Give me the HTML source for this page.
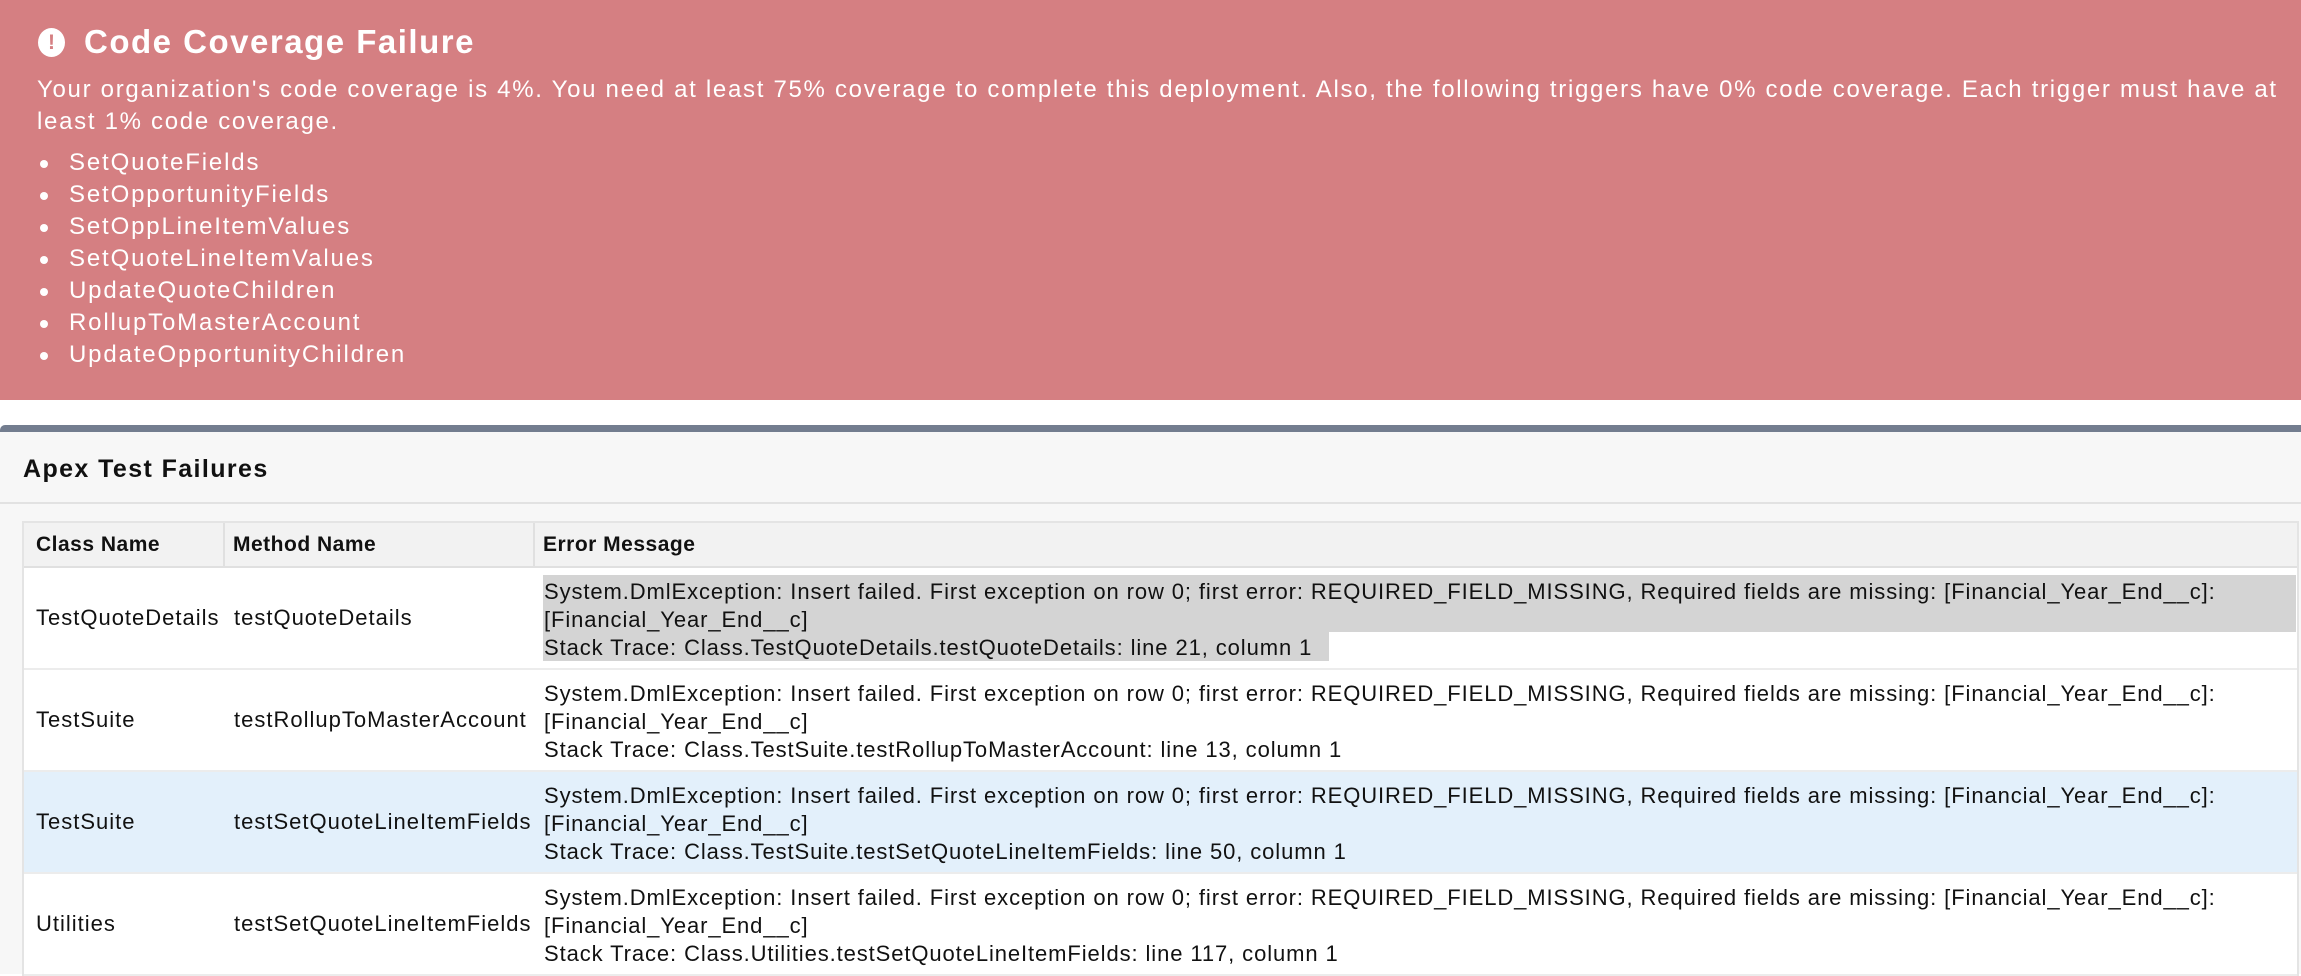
<!DOCTYPE html>
<html><head><meta charset="utf-8"><style>
*{margin:0;padding:0;box-sizing:border-box}
body{width:2301px;height:974px;overflow:hidden;background:#fff;font-family:"Liberation Sans",Arial,sans-serif;position:relative}
.banner{position:absolute;left:0;top:0;width:2301px;height:400px;background:#d57f82;color:#fff}
.title{position:absolute;left:84px;top:20px;font-size:33px;font-weight:bold;line-height:44px;white-space:nowrap;letter-spacing:1.5px}
.icon{position:absolute;left:38px;top:28px;width:27px;height:29px;border-radius:50%;background:#fff;color:#d57f82;font-weight:bold;font-size:21px;line-height:29px;text-align:center}
.para{position:absolute;left:37px;top:74px;font-size:24px;line-height:32px;width:2290px;white-space:nowrap;letter-spacing:1.7px}
ul{position:absolute;left:37px;top:147px;list-style:none;font-size:24px;line-height:32px;letter-spacing:1.85px}
li{position:relative;padding-left:32px;white-space:nowrap}
li:before{content:"";position:absolute;left:3px;top:13px;width:8px;height:8px;border-radius:50%;background:#fff}
.bar{position:absolute;left:0;top:425px;width:2301px;height:7px;background:#737d8f;border-top-left-radius:5px}
.panel{position:absolute;left:0;top:432px;width:2301px;height:542px;background:#f7f7f7}
.ptitle{position:absolute;left:23px;top:454px;font-size:25px;font-weight:bold;color:#111;line-height:30px;letter-spacing:1.4px}
.sep{position:absolute;left:0;top:502px;width:2301px;height:2px;background:#e2e2e2}
.tbl{position:absolute;left:22px;top:521px;width:2277px;border:2px solid #e4e4e4;border-bottom:none;background:#fff}
.row{position:relative;height:102px;border-bottom:2px solid #ececec;font-size:22px;color:#111;letter-spacing:1px}
.err{position:absolute;left:520px;top:10px;line-height:28px;white-space:nowrap;letter-spacing:0.9px}
.hdr{height:45px;background:#f2f2f2;border-bottom:2px solid #e0e0e0;font-weight:bold;font-size:21px;letter-spacing:0.5px}
.c{position:absolute;top:0;height:100%;display:flex;align-items:center;white-space:nowrap}
.c1{left:12px}.c2{left:210px}.c3{left:520px}
.hdr .c2,.hdr .c3{border-left:2px solid #e0e0e0;padding-left:8px}
.hdr .c2{left:199px}.hdr .c3{left:509px;right:0}
.blue{background:#e3f0fb}
.hl{position:absolute;background:#d4d4d4}
</style></head><body>
<div class="banner">
<div class="icon">!</div>
<div class="title">Code Coverage Failure</div>
<div class="para">Your organization's code coverage is 4%. You need at least 75% coverage to complete this deployment. Also, the following triggers have 0% code coverage. Each trigger must have at<br>least 1% code coverage.</div>
<ul><li>SetQuoteFields</li><li>SetOpportunityFields</li><li>SetOppLineItemValues</li><li>SetQuoteLineItemValues</li><li>UpdateQuoteChildren</li><li>RollupToMasterAccount</li><li>UpdateOpportunityChildren</li></ul>
</div>
<div class="bar"></div>
<div class="panel"></div>
<div class="ptitle">Apex Test Failures</div>
<div class="sep"></div>
<div class="tbl">
<div class="row hdr"><div class="c c1">Class Name</div><div class="c c2">Method Name</div><div class="c c3">Error Message</div></div>
<div class="row">
<div class="hl" style="left:519px;top:7px;width:1753px;height:57px"></div>
<div class="hl" style="left:519px;top:64px;width:786px;height:29px"></div>
<div class="c c1">TestQuoteDetails</div><div class="c c2">testQuoteDetails</div>
<div class="err">System.DmlException: Insert failed. First exception on row 0; first error: REQUIRED_FIELD_MISSING, Required fields are missing: [Financial_Year_End__c]:<br>[Financial_Year_End__c]<br>Stack Trace: Class.TestQuoteDetails.testQuoteDetails: line 21, column 1</div></div>
<div class="row">
<div class="c c1">TestSuite</div><div class="c c2">testRollupToMasterAccount</div>
<div class="err">System.DmlException: Insert failed. First exception on row 0; first error: REQUIRED_FIELD_MISSING, Required fields are missing: [Financial_Year_End__c]:<br>[Financial_Year_End__c]<br>Stack Trace: Class.TestSuite.testRollupToMasterAccount: line 13, column 1</div></div>
<div class="row blue">
<div class="c c1">TestSuite</div><div class="c c2">testSetQuoteLineItemFields</div>
<div class="err">System.DmlException: Insert failed. First exception on row 0; first error: REQUIRED_FIELD_MISSING, Required fields are missing: [Financial_Year_End__c]:<br>[Financial_Year_End__c]<br>Stack Trace: Class.TestSuite.testSetQuoteLineItemFields: line 50, column 1</div></div>
<div class="row">
<div class="c c1">Utilities</div><div class="c c2">testSetQuoteLineItemFields</div>
<div class="err">System.DmlException: Insert failed. First exception on row 0; first error: REQUIRED_FIELD_MISSING, Required fields are missing: [Financial_Year_End__c]:<br>[Financial_Year_End__c]<br>Stack Trace: Class.Utilities.testSetQuoteLineItemFields: line 117, column 1</div></div>
</div>
</body></html>
